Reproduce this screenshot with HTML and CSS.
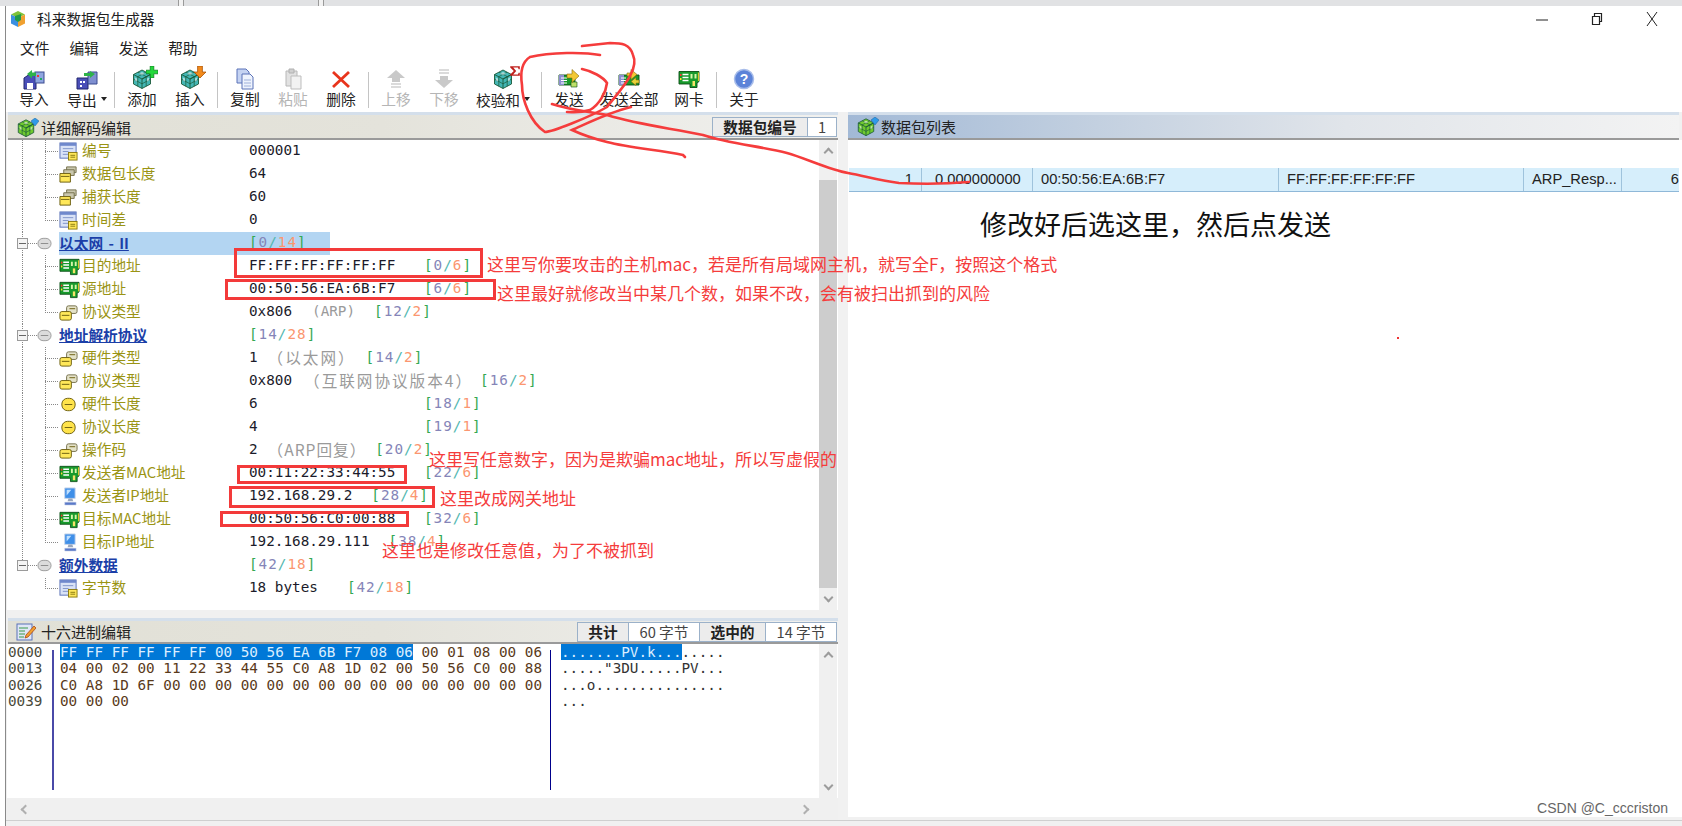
FILE: index.html
```html
<!DOCTYPE html>
<html lang="zh">
<head>
<meta charset="utf-8">
<title>科来数据包生成器</title>
<link rel="stylesheet" href="styles.css">
</head>
<body>
<svg class="defs" width="0" height="0" aria-hidden="true">
  <symbol id="cube" viewBox="0 0 22 22">
    <path d="M11 2l8.500 4.500v9.500L11 20.500 2.500 16V6.500z" fill="currentColor" stroke="#1b5a3a" stroke-width=".9"/>
    <path d="M2.500 6.500L11 11l8.500-4.500L11 11v9.500" fill="none" stroke="#1b5a3a" stroke-width=".9"/>
    <path d="M7 4.200l8.500 4.600M15 4.200L6.500 8.800M2.500 11.200l8.500 4.600 8.500-4.600M6.800 8.800v9.500M15.200 8.800v9.500" fill="none" stroke="#1b5a3a" stroke-width=".7"/>
    <path d="M8 5.500l3 1.500 3-1.500-3-1.500zM4 9.500l2 1v3l-2-1zM16 10.500l2-1v3l-2 1z" fill="#fff" opacity=".55"/>
  </symbol>
  <symbol id="nic" viewBox="0 0 22 22">
    <path d="M1 3.500h20v10l-2 1.500v4.500h-7V16H1z" fill="#189a2c" stroke="#0b4d15" stroke-width=".9"/>
    <path d="M4.500 6.500h6M4.500 9.500h6M4.500 12.500h6" stroke="#fff" stroke-width="1.500"/>
    <path d="M2 6h1.500v2H2z" fill="#f33"/><path d="M2 10h1.500v2H2z" fill="#fd3"/>
    <path d="M12.500 6h2v4.500h-2zM16.500 6h2v4.500h-2z" fill="#d8f5a8"/>
    <path d="M14.500 13h2.500v5h-2.500z" fill="#f6e36a"/>
    <path d="M20.500 4.500v8.500" stroke="#d9c62a" stroke-width="1.200"/>
  </symbol>
  <symbol id="send" viewBox="0 0 22 22">
    <path d="M1 7h16v10H1z" fill="#189a2c" stroke="#0b4d15" stroke-width=".9"/>
    <path d="M1 7h5v10H1z" fill="#8d8fd0"/>
    <path d="M3 10h6M3 12.500h6M3 15h6" stroke="#fff" stroke-width="1.200"/>
    <path d="M13 14h6v5h-6z" fill="#bfe06a" stroke="#0b4d15" stroke-width=".6"/>
    <path d="M9 6h5V1.500l7 6.500-7 6.500V10H9z" fill="#f2c835" stroke="#86690a" stroke-width=".6"/>
  </symbol>
  <symbol id="sendall" viewBox="0 0 22 22">
    <path d="M1 7h20v10H1z" fill="#189a2c" stroke="#0b4d15" stroke-width=".9"/>
    <path d="M1 7h5v10H1z" fill="#8d8fd0"/>
    <path d="M3 10h5M3 12.500h5M3 15h5" stroke="#fff" stroke-width="1.200"/>
    <path d="M9 5h4V1.500l6 5-6 5V8H9z" fill="#f2c835" stroke="#86690a" stroke-width=".6"/>
    <path d="M21 12h-3V9.500l-5 4 5 4V15h3z" fill="#e7d33a" stroke="#86690a" stroke-width=".6"/>
  </symbol>
  <symbol id="doc" viewBox="0 0 20 20">
    <rect x="1" y="1" width="17" height="16" fill="#d9e2f6" stroke="#5b72b8"/>
    <rect x="1" y="1" width="17" height="3" fill="#6f88cc"/>
    <path d="M4 7h11M4 10h6M4 13h6" stroke="#7f93c8"/>
    <rect x="10" y="11" width="9" height="8" fill="#ffe85a" stroke="#8a7a10"/>
    <path d="M12 14h5M12 16h5" stroke="#8a7a10"/>
  </symbol>
  <symbol id="stack" viewBox="0 0 20 20">
    <g stroke="#75704c" fill="#c9c7ae">
      <path d="M8 2h10v6H8z"/><path d="M5 5h11v6H5z"/>
    </g>
    <path d="M1 9h11v9H1z" fill="#ffe85a" stroke="#6b5e10"/>
    <path d="M2 12h9" stroke="#6b5e10"/>
  </symbol>
  <symbol id="pair" viewBox="0 0 20 20">
    <rect x="8" y="3" width="11" height="8" rx="2" fill="#e4e2c8" stroke="#75704c"/>
    <rect x="1" y="9" width="12" height="9" rx="2" fill="#ffe85a" stroke="#6b5e10"/>
    <path d="M11 6h6M3 13h8" stroke="#6b5e10"/>
  </symbol>
  <symbol id="coin" viewBox="0 0 20 20">
    <rect x="3" y="3.500" width="14" height="13" rx="6" fill="#ffe34a" stroke="#6b5e10"/>
    <path d="M6 10h8" stroke="#6b5e10"/>
  </symbol>
  <symbol id="pc" viewBox="0 0 20 20">
    <path d="M6 1h11v11H6z" fill="#3f8fe8" stroke="#c9d6ea"/>
    <path d="M8 3h5l-5 6z" fill="#bfe0ff"/>
    <path d="M10 12h4l1 3H9z" fill="#9aa7bd"/>
    <path d="M6 16h12v3H6z" fill="#5a79c8" stroke="#d5dcec" stroke-width=".5"/>
  </symbol>
  <symbol id="ball" viewBox="0 0 16 16">
    <rect x="1" y="2.500" width="14" height="11" rx="5.500" fill="#dcdcdc" stroke="#9a9a9a"/>
    <path d="M4 8h8" stroke="#8a8a8a"/>
  </symbol>
</svg>

<div class="strip"><i class="tick t1"></i><i class="tick t2"></i></div>

<div class="window">
  <header class="title">
    <svg class="logo" viewBox="0 0 18 18"><path d="M9 1l7 3.500-7 3.500-7-3.500z" fill="#7fc23a"/><path d="M2 4.500l7 3.500v9l-7-3.500z" fill="#3b8fe0"/><path d="M16 4.500L9 8v9l7-3.500z" fill="#f0a030"/><path d="M6 6l6-2v6l-3 2-3-2z" fill="#1f9a4a"/></svg>
    <span class="title-text">科来数据包生成器</span>
    <div class="controls">
      <svg class="ctl" viewBox="0 0 14 14"><path d="M1 8h12" stroke="#222"/></svg>
      <svg class="ctl" viewBox="0 0 14 14"><path d="M2.500 4.500h7v8h-7zM4.500 4.500v-3h7v8h-2" fill="none" stroke="#222" stroke-width="1.200"/></svg>
      <svg class="ctl" viewBox="0 0 14 14"><path d="M2 0l10 14M12 0L2 14" stroke="#222"/></svg>
    </div>
  </header>

  <nav class="menu"><span>文件</span><span>编辑</span><span>发送</span><span>帮助</span></nav>

  <div class="toolbar">
    <div class="tb"><svg class="ti" viewBox="0 0 22 22"><path d="M1 10l6-4h6v15H1z" fill="#4a4fb8" stroke="#22266e"/><path d="M4 15h6v6H4z" fill="#fff"/><rect x="12" y="4" width="9" height="11" fill="#8fa6e0" stroke="#3b4a90"/><path d="M14 7h2v2h-2z" fill="#e33"/><path d="M17 10h2v2h-2z" fill="#2a6"/><path d="M4 6l5-4v2.500h4v3.500H9v2.500z" fill="#2fb24a"/></svg><span>导入</span></div>
    <div class="tb tb-drop1"><svg class="ti" viewBox="0 0 22 22"><path d="M1 10h11v11H1z" fill="#4a4fb8" stroke="#22266e"/><path d="M4 13h2v2H4zM7 13h2v2H7zM4 17h2v2H4z" fill="#fff"/><path d="M12 4h9v12h-9z" fill="#7f8fd0" stroke="#3b4a90"/><path d="M14 3l5 3-5 4V8H8V5h6z" fill="#2fb24a"/></svg><span class="lbl">导出<b class="caret"></b></span></div>
    <i class="sep"></i>
    <div class="tb"><span class="ticon"><svg class="ti teal"><use href="#cube"/></svg><svg class="badge" viewBox="0 0 10 10"><path d="M3.500 0h3v3.500H10v3H6.500V10h-3V6.500H0v-3h3.500z" fill="#22d83a" stroke="#0a7a1a" stroke-width=".6"/></svg></span><span>添加</span></div>
    <div class="tb"><span class="ticon"><svg class="ti teal"><use href="#cube"/></svg><svg class="badge" viewBox="0 0 10 10"><path d="M3 0h4v5h3L5 10 0 5h3z" fill="#f28a1c" stroke="#a34b00" stroke-width=".6"/></svg></span><span>插入</span></div>
    <i class="sep"></i>
    <div class="tb"><svg class="ti" viewBox="0 0 22 22"><path d="M3 1h9l3 3v11H3z" fill="#c5d3f2" stroke="#5b72b8"/><path d="M8 6h8l3 3v12H8z" fill="#eef3fd" stroke="#5b72b8"/><path d="M10 12h7M10 15h7M10 18h7" stroke="#9fb0da"/></svg><span>复制</span></div>
    <div class="tb off"><svg class="ti" viewBox="0 0 22 22"><path d="M4 3h11v15H4z" fill="#e2e2e2" stroke="#b8b8b8"/><path d="M7 1h5v4H7z" fill="#cfcfcf" stroke="#b0b0b0"/><path d="M9 8h10v13H9z" fill="#f2f2f2" stroke="#bdbdbd"/></svg><span>粘贴</span></div>
    <div class="tb"><svg class="ti" viewBox="0 0 22 22"><path d="M3 4l16 15M19 4L3 19" stroke="#e8341c" stroke-width="2.800"/></svg><span>删除</span></div>
    <i class="sep"></i>
    <div class="tb off"><svg class="ti" viewBox="0 0 22 22"><path d="M11 2l9 8h-5v4H7v-4H2z" fill="#c9c9c9"/><path d="M6 16h10M6 19h10" stroke="#cfcfcf" stroke-width="1.500"/></svg><span>上移</span></div>
    <div class="tb off"><svg class="ti" viewBox="0 0 22 22"><path d="M6 2h10M6 5h10" stroke="#cfcfcf" stroke-width="1.500"/><path d="M11 20l9-8h-5V8H7v4H2z" fill="#c9c9c9"/></svg><span>下移</span></div>
    <div class="tb tb-drop2"><span class="ticon"><svg class="ti teal"><use href="#cube"/></svg><svg class="badge sigma" viewBox="0 0 10 10"><path d="M1 1h8v2.500H8L7.500 2H3.500L6 5 3.500 8h4L8 6.500h1V9H1V8l3-3-3-3z" fill="#c0201c"/></svg></span><span class="lbl">校验和<b class="caret"></b></span></div>
    <i class="sep"></i>
    <div class="tb"><svg class="ti"><use href="#send"/></svg><span>发送</span></div>
    <div class="tb tb-all"><svg class="ti"><use href="#sendall"/></svg><span>发送全部</span></div>
    <div class="tb"><svg class="ti"><use href="#nic"/></svg><span>网卡</span></div>
    <i class="sep"></i>
    <div class="tb"><svg class="ti" viewBox="0 0 22 22"><circle cx="11" cy="11" r="9.500" fill="#5c83d8" stroke="#a8bdea" stroke-width="1.500"/><text x="11" y="16" class="q">?</text></svg><span>关于</span></div>
  </div>

  <main class="panes">
    <section class="left">
      <div class="head">
        <span class="hwrap"><svg class="hicon green"><use href="#cube"/></svg><svg class="gem" viewBox="0 0 8 8"><path d="M4 0l4 3-4 5-4-5z" fill="#2f9ae8" stroke="#1a5f9a" stroke-width=".5"/></svg></span><span class="head-title">详细解码编辑</span>
        <div class="cells"><b class="cell lab w-pk">数据包编号</b><span class="cell val w-one">1</span></div>
      </div>
      <div class="detail">
        <div class="tree">
          <div class="row leaf"><svg class="ic"><use href="#doc"/></svg><span class="nm">编号</span><span class="v"><span>000001</span></span></div>
          <div class="row leaf"><svg class="ic"><use href="#stack"/></svg><span class="nm">数据包长度</span><span class="v"><span>64</span></span></div>
          <div class="row leaf"><svg class="ic"><use href="#stack"/></svg><span class="nm">捕获长度</span><span class="v"><span>60</span></span></div>
          <div class="row leaf end"><svg class="ic"><use href="#doc"/></svg><span class="nm">时间差</span><span class="v"><span>0</span></span></div>

          <div class="row sec hl"><span class="gut"><i class="box"></i><svg class="ball"><use href="#ball"/></svg></span><a class="st">以太网 - II</a><span class="v"><span class="rng">[<em>0</em><s>/</s><u>14</u>]</span></span></div>
          <div class="row leaf"><svg class="ic nicw"><use href="#nic"/></svg><span class="nm">目的地址</span><span class="v"><span class="wide">FF:FF:FF:FF:FF:FF</span><span class="rng">[<em>0</em><s>/</s><u>6</u>]</span></span></div>
          <div class="row leaf"><svg class="ic nicw"><use href="#nic"/></svg><span class="nm">源地址</span><span class="v"><span class="wide">00:50:56:EA:6B:F7</span><span class="rng">[<em>6</em><s>/</s><u>6</u>]</span></span></div>
          <div class="row leaf end"><svg class="ic"><use href="#pair"/></svg><span class="nm">协议类型</span><span class="v"><span>0x806</span><span class="note n1">(ARP)</span><span class="rng">[<em>12</em><s>/</s><u>2</u>]</span></span></div>

          <div class="row sec"><span class="gut"><i class="box"></i><svg class="ball"><use href="#ball"/></svg></span><a class="st">地址解析协议</a><span class="v"><span class="rng">[<em>14</em><s>/</s><u>28</u>]</span></span></div>
          <div class="row leaf"><svg class="ic"><use href="#pair"/></svg><span class="nm">硬件类型</span><span class="v"><span>1</span><span class="note n2">（以太网）</span><span class="rng">[<em>14</em><s>/</s><u>2</u>]</span></span></div>
          <div class="row leaf"><svg class="ic"><use href="#pair"/></svg><span class="nm">协议类型</span><span class="v"><span>0x800</span><span class="note n3">（互联网协议版本4）</span><span class="rng">[<em>16</em><s>/</s><u>2</u>]</span></span></div>
          <div class="row leaf"><svg class="ic"><use href="#coin"/></svg><span class="nm">硬件长度</span><span class="v"><span class="wide">6</span><span class="rng">[<em>18</em><s>/</s><u>1</u>]</span></span></div>
          <div class="row leaf"><svg class="ic"><use href="#coin"/></svg><span class="nm">协议长度</span><span class="v"><span class="wide">4</span><span class="rng">[<em>19</em><s>/</s><u>1</u>]</span></span></div>
          <div class="row leaf"><svg class="ic"><use href="#pair"/></svg><span class="nm">操作码</span><span class="v"><span>2</span><span class="note n4">（ARP回复）</span><span class="rng">[<em>20</em><s>/</s><u>2</u>]</span></span></div>
          <div class="row leaf"><svg class="ic nicw"><use href="#nic"/></svg><span class="nm">发送者MAC地址</span><span class="v"><span class="wide">00:11:22:33:44:55</span><span class="rng">[<em>22</em><s>/</s><u>6</u>]</span></span></div>
          <div class="row leaf"><svg class="ic"><use href="#pc"/></svg><span class="nm">发送者IP地址</span><span class="v"><span class="gap21">192.168.29.2</span><span class="rng">[<em>28</em><s>/</s><u>4</u>]</span></span></div>
          <div class="row leaf"><svg class="ic nicw"><use href="#nic"/></svg><span class="nm">目标MAC地址</span><span class="v"><span class="wide">00:50:56:C0:00:88</span><span class="rng">[<em>32</em><s>/</s><u>6</u>]</span></span></div>
          <div class="row leaf end"><svg class="ic"><use href="#pc"/></svg><span class="nm">目标IP地址</span><span class="v"><span class="gap21">192.168.29.111</span><span class="rng">[<em>38</em><s>/</s><u>4</u>]</span></span></div>

          <div class="row sec last"><span class="gut"><i class="box"></i><svg class="ball"><use href="#ball"/></svg></span><a class="st">额外数据</a><span class="v"><span class="rng">[<em>42</em><s>/</s><u>18</u>]</span></span></div>
          <div class="row leaf end solo"><svg class="ic"><use href="#doc"/></svg><span class="nm">字节数</span><span class="v"><span class="gap31">18 bytes</span><span class="rng">[<em>42</em><s>/</s><u>18</u>]</span></span></div>
        </div>
        <div class="vbar"><i class="ar up"></i><i class="thumb"></i><i class="ar down"></i></div>
      </div>
      <div class="gapband"></div>
      <div class="head short">
        <svg class="hicon" viewBox="0 0 20 20"><rect x="1" y="2" width="15" height="16" fill="#dfe6f6" stroke="#5b72b8"/><path d="M3 6h9M3 9h6M3 12h6M3 15h5" stroke="#3a9a4a"/><path d="M18 4l2 2-8 9-3 1 1-3z" fill="#f0a030" stroke="#a3380c" stroke-width=".7"/></svg><span class="head-title">十六进制编辑</span>
        <div class="cells"><b class="cell lab w-a">共计</b><span class="cell val w-b">60 字节</span><b class="cell lab w-c">选中的</b><span class="cell val w-d">14 字节</span></div>
      </div>
      <div class="hex">
        <div class="hexmain">
<pre class="addr">0000
0013
0026
0039</pre>
<pre class="bytes"><span class="sel">FF FF FF FF FF FF 00 50 56 EA 6B F7 08 06</span> 00 01 08 00 06
04 00 02 00 11 22 33 44 55 C0 A8 1D 02 00 50 56 C0 00 88
C0 A8 1D 6F 00 00 00 00 00 00 00 00 00 00 00 00 00 00 00
00 00 00</pre>
<pre class="ascii"><span class="sel">.......PV.k...</span>.....
....."3DU.....PV...
...o...............
...</pre>
        </div>
        <div class="vbar slim"><i class="ar up"></i><i class="ar down"></i></div>
      </div>
      <div class="hbar"><i class="ar lf"></i><i class="ar rt"></i></div>
    </section>

    <section class="right">
      <div class="head blue"><span class="hwrap"><svg class="hicon green"><use href="#cube"/></svg><svg class="gem" viewBox="0 0 8 8"><path d="M4 0l4 3-4 5-4-5z" fill="#2f9ae8" stroke="#1a5f9a" stroke-width=".5"/></svg></span><span class="head-title">数据包列表</span></div>
      <div class="list">
        <div class="pkt">
          <span class="c1">1</span><span class="c2">0.000000000</span><span class="c3">00:50:56:EA:6B:F7</span><span class="c4">FF:FF:FF:FF:FF:FF</span><span class="c5">ARP_Resp...</span><span class="c6">6</span>
        </div>
      </div>
    </section>
  </main>
  <div class="status"></div>
</div>

<div class="overlay">
  <i class="rbox b1"></i><i class="rbox b2"></i><i class="rbox b3"></i><i class="rbox b4"></i><i class="rbox b5"></i>
  <p class="note-r a1">这里写你要攻击的主机mac，若是所有局域网主机，就写全F，按照这个格式</p>
  <p class="note-r a2">这里最好就修改当中某几个数，如果不改，会有被扫出抓到的风险</p>
  <p class="note-r a3">这里写任意数字，因为是欺骗mac地址，所以写虚假的</p>
  <p class="note-r a4">这里改成网关地址</p>
  <p class="note-r a5">这里也是修改任意值，为了不被抓到</p>
  <p class="big">修改好后选这里，然后点发送</p>
  <i class="dot"></i>
  <svg class="scribble" viewBox="0 0 1682 826">
    <path d="M600 55C585 52 550 52 530 57C522 62 520 72 522 85C522 100 530 122 545 132C552 132 590 117 607 107C620 90 640 70 633 55C630 44 622 43 610 43L582 46"/>
    <path d="M582 69C592 71 603 77 607 83C606 92 600 104 590 110C580 113 575 112 567 112"/>
    <path d="M552 104C570 110 590 112 607 115C640 125 670 128 703 135C730 144 760 146 787 153C805 158 830 170 848 173C865 176 880 181 899 183C920 184 945 184 969 182"/>
    <path d="M631 107C610 112 590 122 572 130C585 136 595 139 607 142C630 148 660 150 683 155L685 157"/>
  </svg>
</div>
<div class="watermark">CSDN @C_cccriston</div>
</body>
</html>
```
FILE: styles.css
```css
* { box-sizing: border-box; }
html, body { margin: 0; padding: 0; }
body {
  width: 1682px; height: 826px; overflow: hidden; position: relative;
  background: #fff; color: #111;
  font-family: "Noto Sans CJK SC", "Noto Sans", sans-serif;
  font-size: 14.7px;
}
.defs { position: absolute; }
svg { display: block; flex: none; }

.strip { height: 6px; background: #e1e2e4; display: flex; }
.tick { display: block; width: 6px; height: 6px; border-left: 1px solid #9a9a9a; border-right: 1px solid #9a9a9a; background: #f2f2f2; }
.t1 { margin-left: 178px; }
.t2 { margin-left: 134px; }

.window { height: 820px; margin-left: 5px; border-left: 1px solid #8a8a8a; display: flex; flex-direction: column; }

.title { height: 29px; flex: none; display: flex; align-items: center; padding: 0 0 4px 3px; }
.logo { width: 18px; height: 18px; }
.title-text { margin-left: 10px; line-height: 20px; color: #222; }
.controls { margin-left: auto; display: flex; padding-right: 23px; gap: 41px; }
.ctl { width: 14px; height: 14px; }

.menu { height: 26px; flex: none; display: flex; align-items: center; padding: 0 0 2px 14px; gap: 20px; color: #222; }

.toolbar { height: 51px; flex: none; display: flex; padding: 7px 0 0 4px; }
.tb { width: 48px; display: flex; flex-direction: column; align-items: center; color: #222; white-space: nowrap; }
.tb > span:last-child { line-height: 17px; height: 18px; }
.tb.off { color: #b5b5b5; }
.tb-drop1 { width: 53px; padding-left: 5px; }
.tb-drop2 { width: 70px; }
.tb-all { width: 72px; }
.ti { width: 22px; height: 22px; }
.ticon { position: relative; display: block; width: 22px; height: 22px; }
.teal { color: #43b6b4; }
.green { color: #6fca2e; }
.badge { position: absolute; right: -5px; top: -2px; width: 12px; height: 12px; }
.sigma { right: -7px; top: -3px; }
.lbl { display: flex; align-items: center; }
.caret { margin-left: 4px; border: 3.5px solid transparent; border-top: 4px solid #222; border-bottom: 0; }
.sep { display: block; width: 1px; height: 36px; margin: 4px 3px 0; background: #c4c4c4; }
.q { font: bold 14px "Liberation Sans", sans-serif; fill: #fff; text-anchor: middle; }

.panes { height: 708px; flex: none; display: flex; background: #f1f1f1; }
.left { width: 832px; flex: none; display: flex; flex-direction: column; background: #f0f0f0; }
.right { flex: 1; margin-left: 10px; display: flex; flex-direction: column; }

.head {
  height: 28px; flex: none; display: flex; align-items: center;
  margin-left: 2px; padding: 3px 1px 0 8px;
  border-top: 3px solid #d4dfeb; border-bottom: 2px solid #9a9a9a;
  background: linear-gradient(90deg, #e1e0d6 0%, #e4e3db 45%, #f1f1ef 100%);
  color: #222;
}
.head.short { height: 26px; padding-top: 0; }
.hwrap { position: relative; display: block; width: 20px; height: 20px; }
.gem { position: absolute; right: -3px; top: 0; width: 8px; height: 8px; }
.hicon { width: 20px; height: 20px; }
.head-title { margin-left: 5px; line-height: 20px; font-size: 15px; }
.cells { margin-left: auto; display: flex; height: 20px; border: 1px solid #9bb1c9; margin-top: -3px; background: #fff; }
.short .cells { margin-top: 0; }
.cell { display: flex; align-items: center; justify-content: center; border-left: 1px solid #9bb1c9; }
.cell:first-child { border-left: 0; }
.lab { background: #ececec; font-weight: 700; color: #222; }
.val { color: #444; }
.w-pk { width: 94px; } .w-one { width: 29px; }
.w-a { width: 50px; } .w-b { width: 71px; } .w-c { width: 66px; } .w-d { width: 71px; }

.detail { height: 470px; flex: none; display: flex; margin-left: 1px; background: #fff; }
.tree { width: 812px; flex: none; font-family: "DejaVu Sans Mono", "Noto Sans CJK SC", monospace; }
.row {
  height: 23px; display: grid; align-items: center; white-space: nowrap;
  grid-template-columns: 75px 167px 1fr;
}
.leaf {
  padding-left: 52px; grid-template-columns: 23px 167px 1fr;
  background:
    repeating-linear-gradient(0deg, #888 0 1px, transparent 1px 2px) 15px 0 / 1px 100% no-repeat,
    repeating-linear-gradient(0deg, #888 0 1px, transparent 1px 2px) 38px 0 / 1px 100% no-repeat,
    repeating-linear-gradient(90deg, #888 0 1px, transparent 1px 2px) 38px 11px / 13px 1px no-repeat;
}
.leaf.end {
  background:
    repeating-linear-gradient(0deg, #888 0 1px, transparent 1px 2px) 15px 0 / 1px 100% no-repeat,
    repeating-linear-gradient(0deg, #888 0 1px, transparent 1px 2px) 38px 0 / 1px 12px no-repeat,
    repeating-linear-gradient(90deg, #888 0 1px, transparent 1px 2px) 38px 11px / 13px 1px no-repeat;
}
.leaf.solo {
  background:
    repeating-linear-gradient(0deg, #888 0 1px, transparent 1px 2px) 38px 0 / 1px 12px no-repeat,
    repeating-linear-gradient(90deg, #888 0 1px, transparent 1px 2px) 38px 11px / 13px 1px no-repeat;
}
.ic { width: 19px; height: 19px; }
.nicw { width: 21px; height: 21px; }
.nm { color: #9a9414; font-family: "Noto Sans CJK SC", sans-serif; line-height: 20px; padding-bottom: 3px; }
.v { display: flex; align-items: center; font-size: 14.3px; line-height: 20px; padding-bottom: 3px; color: #1b1b2a; }
.wide { width: 175px; }
.gap21 { margin-right: 19px; }
.gap31 { margin-right: 29px; }
.note { color: #9a9a9a; }
.n1 { margin: 0 19px 0 20px; }
.n2 { margin: 0 10px 0 10px; font-family: "Noto Sans CJK SC", sans-serif; font-size: 15.6px; letter-spacing: 2px; }
.n3 { margin: 0 7px 0 12px; font-family: "Noto Sans CJK SC", sans-serif; font-size: 15.6px; letter-spacing: 2px; }
.n4 { margin: 0 9px 0 10px; font-family: "Noto Sans CJK SC", sans-serif; font-size: 15.6px; letter-spacing: 1px; }
.rng { color: #33a853; letter-spacing: 1px; }
.rng em { font-style: normal; color: #8585b8; }
.rng s { text-decoration: none; color: #52b8b0; }
.rng u { text-decoration: none; color: #fb9670; }
.sec {
  grid-template-columns: 52px 190px 1fr;
  background:
    repeating-linear-gradient(0deg, #888 0 1px, transparent 1px 2px) 15px 0 / 1px 100% no-repeat,
    repeating-linear-gradient(90deg, #888 0 1px, transparent 1px 2px) 15px 11px / 16px 1px no-repeat;
}
.sec.last {
  background:
    repeating-linear-gradient(0deg, #888 0 1px, transparent 1px 2px) 15px 0 / 1px 12px no-repeat,
    repeating-linear-gradient(90deg, #888 0 1px, transparent 1px 2px) 15px 11px / 16px 1px no-repeat;
}
.sec.hl {
  background:
    repeating-linear-gradient(0deg, #888 0 1px, transparent 1px 2px) 15px 0 / 1px 100% no-repeat,
    repeating-linear-gradient(90deg, #888 0 1px, transparent 1px 2px) 15px 11px / 16px 1px no-repeat,
    linear-gradient(#b3d5f2, #b3d5f2) 52px 0 / 271px 100% no-repeat;
}
.gut { display: flex; align-items: center; padding-left: 10px; }
.box { display: block; width: 11px; height: 11px; border: 1px solid #9a9a9a; background: linear-gradient(#666, #666) center / 7px 1px no-repeat, #f4f4f4; }
.ball { width: 15px; height: 15px; margin-left: 9px; }
.st { color: #1b3fa8; font-family: "Noto Sans CJK SC", sans-serif; font-weight: 700; text-decoration: underline; line-height: 19px; word-spacing: 2px; justify-self: start; margin-bottom: 3px; }

.vbar { width: 18px; flex: none; position: relative; background: #f0f0f0; }
.thumb { position: absolute; left: 0; right: 0; top: 40px; height: 408px; background: #cdcdcd; }
.ar { position: absolute; width: 7px; height: 7px; border-left: 2px solid #9c9c9c; border-top: 2px solid #9c9c9c; }
.up { left: 6px; top: 9px; transform: rotate(45deg); }
.down { left: 6px; bottom: 9px; transform: rotate(225deg); }
.lf { left: 16px; top: 8px; transform: rotate(-45deg); border-color: #b0b0b0; }
.rt { right: 30px; top: 8px; transform: rotate(135deg); border-color: #b0b0b0; }

.gapband { height: 8px; flex: none; }
.hex { height: 154px; flex: none; display: flex; margin-left: 1px; background: #fff; }
.hexmain {
  width: 812px; flex: none; display: flex;
  background:
    linear-gradient(#4a4aa8, #4a4aa8) 45px 6px / 2px 140px no-repeat,
    linear-gradient(#00008b, #00008b) 543px 6px / 1px 140px no-repeat;
}
pre { margin: 0; font: 14.3px/16.3px "DejaVu Sans Mono", monospace; color: #5a3a1a; }
.addr { width: 53px; padding-left: 1px; color: #4a4a3a; }
.bytes { width: 501px; }
.ascii { color: #333; }
.sel { background: #0078d7; color: #dbeeff; display: inline-block; }
.hbar { height: 22px; flex: none; position: relative; background: #f0f0f0; }

.right .head { margin-left: 0; margin-right: 3px; padding-top: 0; }
.head.blue { background: linear-gradient(90deg, #a2b9d6 0%, #c3d0e0 30%, #e1e5ea 60%, #f3f3f3 100%); }
.list { height: 677px; flex: none; padding-top: 28px; background: #fff; }
.pkt {
  height: 24px; margin-right: 3px; display: grid; align-items: center;
  grid-template-columns: 73px 111px 246px 245px 98px 57px;
  background: #d6eefb; border-bottom: 1px solid #8fb8d8; margin-left: 1px;
  font-family: "Liberation Sans", sans-serif; color: #222;
}
.pkt span { height: 100%; line-height: 23px; padding: 0 8px; border-right: 1px solid #9fc3dc; overflow: hidden; white-space: nowrap; }
.pkt .c1 { text-align: right; }
.pkt .c2 { padding-left: 13px; }
.pkt .c6 { text-align: right; padding: 0; border-right: 0; }
.status { height: 6px; flex: none; background: #f0f0f0; border-top: 1px solid #cfcfcf; }

.overlay { position: absolute; inset: 0; pointer-events: none; }
.rbox { position: absolute; display: block; border: 3px solid #f33a3a; }
.b1 { left: 234px; top: 248px; width: 249px; height: 30px; }
.b2 { left: 225px; top: 279px; width: 271px; height: 21px; }
.b3 { left: 237px; top: 465px; width: 170px; height: 19px; }
.b4 { left: 229px; top: 486px; width: 206px; height: 22px; }
.b5 { left: 220px; top: 511px; width: 189px; height: 16px; }
.note-r { position: absolute; margin: 0; font-size: 17px; line-height: 24px; color: #f53c3c; white-space: nowrap; }
.a1 { left: 487px; top: 252px; }
.a2 { left: 497px; top: 281px; }
.a3 { left: 429px; top: 447px; }
.a4 { left: 440px; top: 486px; }
.a5 { left: 382px; top: 538px; }
.big { position: absolute; margin: 0; left: 980px; top: 205px; font-size: 27px; line-height: 38px; color: #111; white-space: nowrap; }
.dot { position: absolute; display: block; left: 1397px; top: 337px; width: 2px; height: 2px; background: #e33; }
.scribble { position: absolute; inset: 0; width: 1682px; height: 826px; fill: none; stroke: #f53c3c; stroke-width: 2.600; stroke-linecap: round; }
.watermark { position: absolute; right: 14px; top: 798px; font-size: 14px; line-height: 20px; color: #666; font-family: "Liberation Sans", "Noto Sans CJK SC", sans-serif; }
```
